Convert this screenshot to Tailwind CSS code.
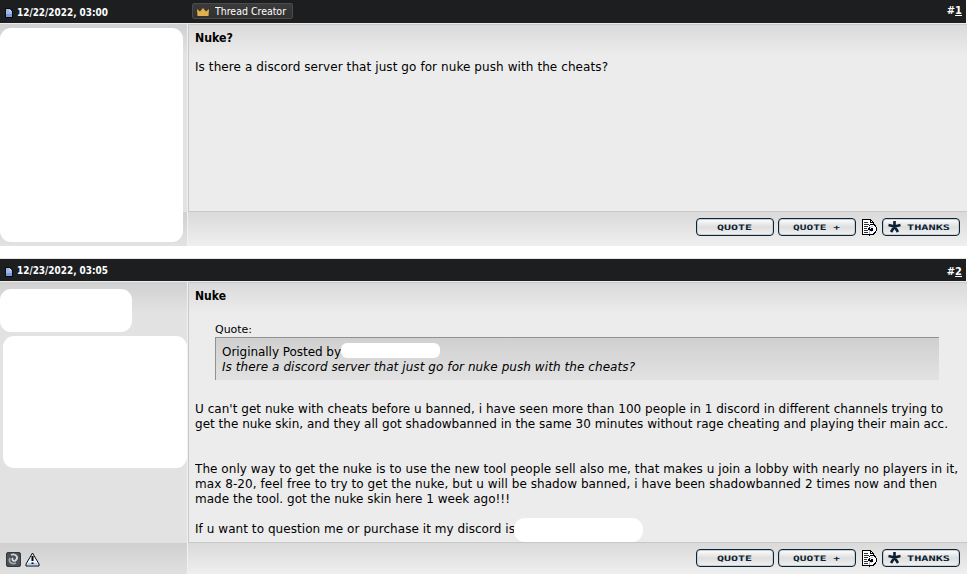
<!DOCTYPE html>
<html lang="en">
<head>
<meta charset="utf-8">
<title>Nuke?</title>
<script src="https://cdn.jsdelivr.net/npm/@tailwindcss/browser@4"></script>
</head>
<body class="bg-white w-[973px] h-[574px] overflow-hidden text-black font-['Verdana','DejaVu_Sans',sans-serif] text-[12px] leading-[15px]">
<svg class="hidden" aria-hidden="true">
  <symbol id="doc" viewBox="0 0 8 10"><path d="M0 0H5L8 3V10H0Z" fill="#080a10"/><path d="M1 1H4.5L7 3.5V9H1Z" fill="#9db7e8"/><path d="M1 6H7V9H1Z" fill="#7c9ad8"/><path d="M4.5 1V3.5H7Z" fill="#dce6fa"/></symbol>
  <symbol id="multi" viewBox="0 0 15 17" shape-rendering="crispEdges">
    <path d="M0 0H9V1H10V2H11V3H12V5H13V6H14V8H15V12H14V14H13V15H12V16H8V17H7V16H0Z" fill="#000"/>
    <path d="M1 1H8V4H11V5H8V6H7V9H6V11H7V15H1Z" fill="#fff"/><path d="M9 2H10V3H9Z" fill="#fff"/>
    <path d="M2 3H6V4H2ZM2 5H7V6H2ZM2 7H6V8H2ZM2 9H5V10H2ZM2 11H6V12H2ZM2 13H6V14H2Z" fill="#333"/>
    <path d="M8 6H12V7H13V8H14V12H13V13H12V14H11V15H8V12H9V13H10V12H11V9H9V10H8V8H7V7H8Z" fill="#fff"/>
    <path d="M8 8H9V7H11V8H9V9H8ZM7 11H8V15H7ZM9 12H10V13H9Z" fill="#a3b6f5"/>
  </symbol>
  <symbol id="star" viewBox="0 0 13 12"><path d="M6.5 5.5V0M6.500 5.500L0.500 4M6.500 5.500L12.500 4M6.500 5.500L3 11M6.500 5.500L10 11" stroke="#0b1f33" stroke-width="2.600" fill="none"/></symbol>
</svg>

<article class="h-[246px] w-[967px]">
  <header class="flex h-[23px] w-[966px] bg-[#1c1e20] text-white">
    <div class="flex w-[192px] pl-[5px] pt-[8px]">
      <svg class="h-[10px] w-[8px]"><use href="#doc"/></svg>
      <svg class="-mt-[4px] ml-[4px] h-[14px] w-[100px]"><text x="0" y="12" textLength="91" lengthAdjust="spacingAndGlyphs" fill="#fff" class="font-['DejaVu_Sans_Condensed','DejaVu_Sans',sans-serif] text-[11px] font-bold">12/22/2022, 03:00</text></svg>
    </div>
    <div class="mt-[3px] flex h-[16px] w-[101px] rounded-[2px] border border-[#4b4b4b] bg-linear-to-b from-[#3b3b3b] to-[#303030]">
      <svg class="ml-[4px] mt-[4px] h-[8px] w-[12px]" viewBox="0 0 12 8"><path d="M0 1L3 3.5L6 0L9 3.5L12 1L11.5 8H0.5Z" fill="#e0b04c"/></svg>
      <svg class="ml-[6px] h-[14px] w-[76px]"><text x="0" y="11" textLength="71" lengthAdjust="spacingAndGlyphs" fill="#fff" class="font-['DejaVu_Sans',sans-serif] text-[10px]">Thread Creator</text></svg>
    </div>
    <div class="ml-auto pr-[4px] pt-[3px] font-['DejaVu_Sans_Condensed','DejaVu_Sans',sans-serif] text-[11px] font-bold">#<span class="underline">1</span></div>
  </header>
  <div class="flex h-[223px] border-t border-[#ececec]">
    <aside class="relative flex w-[188px] flex-col border-r border-[#f1f1f1] bg-[#e2e2e2]">
      <div class="h-[30px] bg-linear-to-b from-[#d0d0d0] to-[#e2e2e2]"></div>
      <div class="mt-[158px] h-[33px] bg-linear-to-b from-[#d0d0d0] to-[#e2e2e2]"></div>
      <div class="absolute left-0 top-[4px] h-[214px] w-[183px] rounded-[11px] bg-white"></div>
    </aside>
    <main class="flex w-[779px] flex-col">
      <section class="h-[188px] border-y border-l border-[#c8c8c8] bg-[#ececec] bg-linear-to-b from-[#dadada] from-0% to-[#ececec] to-[30px] pl-[6px] pt-[5px]">
        <h1 class="font-bold"><svg class="block h-[15px] w-[60px]"><text x="0" y="12" textLength="38" lengthAdjust="spacingAndGlyphs">Nuke?</text></svg></h1>
        <svg class="mt-[14px] block h-[15px] w-[500px]"><text x="0" y="12" textLength="413">Is there a discord server that just go for nuke push with the cheats?</text></svg>
      </section>
      <footer class="flex h-[34px] gap-[4px] bg-linear-to-b from-[#dadada] to-[#efefef] pl-[508px] pt-[6px]">
        <div class="h-[18px] w-[78px] rounded-[4px] border border-[#0b2538] bg-linear-to-b from-white via-[#dedede] to-[#f1f1f1] shadow-[inset_0_0_0_1px_#c9cdd0]"><svg class="h-[16px] w-[76px]"><text x="20" y="11" textLength="35" lengthAdjust="spacingAndGlyphs" fill="#0b1f33" class="font-['DejaVu_Sans_Mono',monospace] text-[7.5px] font-bold">QUOTE</text></svg></div>
        <div class="h-[18px] w-[78px] rounded-[4px] border border-[#0b2538] bg-linear-to-b from-white via-[#dedede] to-[#f1f1f1] shadow-[inset_0_0_0_1px_#c9cdd0]"><svg class="h-[16px] w-[76px]"><text x="14" y="11" textLength="47" lengthAdjust="spacingAndGlyphs" fill="#0b1f33" class="font-['DejaVu_Sans_Mono',monospace] text-[7.5px] font-bold">QUOTE +</text></svg></div>
        <svg class="ml-[2px] mr-[1px] mt-[1px] h-[17px] w-[15px]"><use href="#multi"/></svg>
        <div class="h-[18px] w-[78px] rounded-[4px] border border-[#0b2538] bg-linear-to-b from-white via-[#dedede] to-[#f1f1f1] shadow-[inset_0_0_0_1px_#c9cdd0]"><svg class="h-[16px] w-[76px]"><use href="#star" x="5" y="2" width="13" height="12"/><text x="24" y="11" textLength="43" lengthAdjust="spacingAndGlyphs" fill="#0b1f33" class="font-['DejaVu_Sans_Mono',monospace] text-[7.5px] font-bold">THANKS</text></svg></div>
      </footer>
    </main>
  </div>
</article>

<article class="mt-[12px] w-[967px] border-t border-[#e5e5e5]">
  <header class="flex h-[22px] w-[966px] bg-[#1c1e20] text-white">
    <div class="flex w-[192px] pl-[5px] pt-[8px]">
      <svg class="h-[10px] w-[8px]"><use href="#doc"/></svg>
      <svg class="-mt-[5px] ml-[4px] h-[14px] w-[100px]"><text x="0" y="12" textLength="91" lengthAdjust="spacingAndGlyphs" fill="#fff" class="font-['DejaVu_Sans_Condensed','DejaVu_Sans',sans-serif] text-[11px] font-bold">12/23/2022, 03:05</text></svg>
    </div>
    <div class="ml-auto pr-[4px] pt-[5px] font-['DejaVu_Sans_Condensed','DejaVu_Sans',sans-serif] text-[11px] font-bold">#<span class="underline">2</span></div>
  </header>
  <div class="flex h-[293px] border-t border-[#ececec]">
    <aside class="relative flex w-[188px] flex-col border-r border-[#f1f1f1] bg-[#e2e2e2]">
      <div class="h-[30px] bg-linear-to-b from-[#d0d0d0] to-[#e2e2e2]"></div>
      <div class="mt-[231px] flex h-[31px] bg-linear-to-b from-[#d0d0d0] to-[#e0e0e0] pl-[6px] pt-[9px]">
        <svg class="h-[15px] w-[15px]" viewBox="0 0 15 15"><rect x="0.5" y="0.5" width="14" height="14" rx="1.5" fill="#4b5056" stroke="#33383d"/><path d="M5 3C9 1 13 5 10 8C8 10 5 8 7 6" fill="none" stroke="#d5d8da" stroke-width="1.800"/><path d="M4 6C2 10 6 13 10 11" fill="none" stroke="#a4a9ad" stroke-width="1.800"/></svg>
        <svg class="ml-[4px] h-[15px] w-[15px]" viewBox="0 0 15 15"><path d="M7.5 1L14 12V14H1V12Z" fill="#eef4ff" stroke="#05080f"/><path d="M3 11H12L13 13H2Z" fill="#b2ccfa"/><path d="M7.5 4V9M7.5 10.5V12" stroke="#000" stroke-width="2"/></svg>
      </div>
      <div class="absolute left-0 top-[7px] h-[43px] w-[132px] rounded-[11px] bg-white"></div>
      <div class="absolute left-[3px] top-[54px] h-[132px] w-[184px] rounded-[11px] bg-white"></div>
    </aside>
    <main class="flex w-[779px] flex-col">
      <section class="relative h-[261px] border-y border-l border-[#c8c8c8] bg-[#ececec] bg-linear-to-b from-[#dadada] from-0% to-[#ececec] to-[30px] pl-[6px] pt-[5px]">
        <h2 class="font-bold"><svg class="block h-[15px] w-[60px]"><text x="0" y="12" textLength="31" lengthAdjust="spacingAndGlyphs">Nuke</text></svg></h2>
        <svg class="ml-[20px] mt-[18px] block h-[15px] w-[60px]"><text x="0" y="12" textLength="37" class="text-[11px]">Quote:</text></svg>
        <blockquote class="mt-[1px] ml-[20px] h-[43px] w-[724px] border-l border-t border-[#919191] bg-linear-to-b from-[#d0d0d0] to-[#e2e2e2] pl-[6px] pt-[6px]">
          <div class="flex h-[15px]"><svg class="h-[15px] w-[119px]"><text x="0" y="12" textLength="119">Originally Posted by</text></svg><span class="-mt-[1px] h-[15px] w-[99px] rounded-[6px] bg-white"></span></div>
          <svg class="block h-[16px] w-[500px]"><text x="0" y="12" textLength="413" class="italic">Is there a discord server that just go for nuke push with the cheats?</text></svg>
        </blockquote>
        <svg class="mt-[21px] block h-[30px] w-[770px]"><text x="0" y="12" textLength="748">U can't get nuke with cheats before u banned, i have seen more than 100 people in 1 discord in different channels trying to</text><text x="0" y="27" textLength="753">get the nuke skin, and they all got shadowbanned in the same 30 minutes without rage cheating and playing their main acc.</text></svg>
        <svg class="mt-[30px] block h-[46px] w-[770px]"><text x="0" y="12" textLength="763">The only way to get the nuke is to use the new tool people sell also me, that makes u join a lobby with nearly no players in it,</text><text x="0" y="27" textLength="742">max 8-20, feel free to try to get the nuke, but u will be shadow banned, i have been shadowbanned 2 times now and then</text><text x="0" y="42" textLength="315">made the tool. got the nuke skin here 1 week ago!!!</text></svg>
        <svg class="mt-[14px] block h-[15px] w-[400px]"><text x="0" y="12" textLength="320">If u want to question me or purchase it my discord is</text></svg>
        <div class="absolute left-[325px] top-[235px] h-[24px] w-[129px] rounded-[11px] bg-white"></div>
      </section>
      <footer class="flex h-[31px] gap-[4px] bg-linear-to-b from-[#dadada] to-[#efefef] pl-[508px] pt-[6px]">
        <div class="h-[18px] w-[78px] rounded-[4px] border border-[#0b2538] bg-linear-to-b from-white via-[#dedede] to-[#f1f1f1] shadow-[inset_0_0_0_1px_#c9cdd0]"><svg class="h-[16px] w-[76px]"><text x="20" y="11" textLength="35" lengthAdjust="spacingAndGlyphs" fill="#0b1f33" class="font-['DejaVu_Sans_Mono',monospace] text-[7.5px] font-bold">QUOTE</text></svg></div>
        <div class="h-[18px] w-[78px] rounded-[4px] border border-[#0b2538] bg-linear-to-b from-white via-[#dedede] to-[#f1f1f1] shadow-[inset_0_0_0_1px_#c9cdd0]"><svg class="h-[16px] w-[76px]"><text x="14" y="11" textLength="47" lengthAdjust="spacingAndGlyphs" fill="#0b1f33" class="font-['DejaVu_Sans_Mono',monospace] text-[7.5px] font-bold">QUOTE +</text></svg></div>
        <svg class="ml-[2px] mr-[1px] mt-[1px] h-[17px] w-[15px]"><use href="#multi"/></svg>
        <div class="h-[18px] w-[78px] rounded-[4px] border border-[#0b2538] bg-linear-to-b from-white via-[#dedede] to-[#f1f1f1] shadow-[inset_0_0_0_1px_#c9cdd0]"><svg class="h-[16px] w-[76px]"><use href="#star" x="5" y="2" width="13" height="12"/><text x="24" y="11" textLength="43" lengthAdjust="spacingAndGlyphs" fill="#0b1f33" class="font-['DejaVu_Sans_Mono',monospace] text-[7.5px] font-bold">THANKS</text></svg></div>
      </footer>
    </main>
  </div>
</article>
</body>
</html>
